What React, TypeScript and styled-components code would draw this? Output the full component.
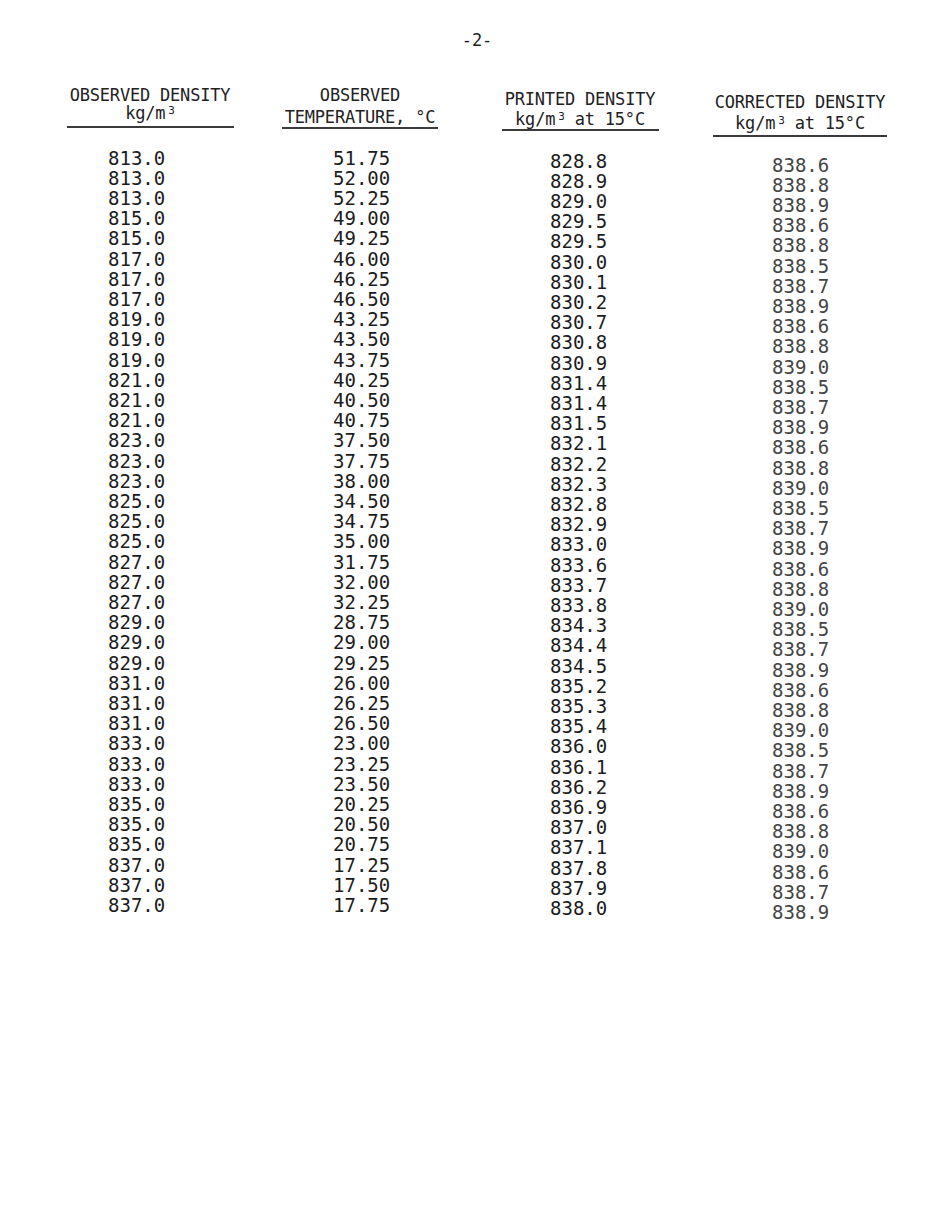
import styled, { createGlobalStyle } from 'styled-components';

const GlobalStyle = createGlobalStyle`
    body {
        margin: 0;
        background: #ffffff;
        font-family: "DejaVu Sans Mono", "Liberation Mono", monospace;
        color: #1e1e1e;
    }
`;

const Page = styled.main`
    width: 950px;
    min-height: 1230px;
    box-sizing: border-box;
    padding-top: 30px;
    background: #fff;
`;

const PageNumber = styled.div`
    text-align: center;
    font-size: 17px;
    line-height: 20px;
    padding-left: 4px;
`;

const Table = styled.section`
    display: grid;
    grid-template-columns: 200px 220px 220px 220px;
    padding-left: 50px;
    margin-top: 36px;
`;

const Column = styled.div<{ $top: number }>`
    display: flex;
    flex-direction: column;
    margin-top: ${(p) => p.$top}px;
`;

const HeadLine = styled.div<{ $gap?: number }>`
    text-align: center;
    font-size: 17px;
    line-height: 19px;
    letter-spacing: -0.2px;
    color: #222;
    margin-top: ${(p) => p.$gap || 0}px;
    white-space: nowrap;
`;

const Sup = styled.span`
    display: inline-block;
    font-size: 11px;
    line-height: 11px;
    position: relative;
    top: -5px;
    margin-left: 3px;
`;

const Rule = styled.div<{ $width: number; $gap: number }>`
    align-self: center;
    width: ${(p) => p.$width}px;
    height: 1.5px;
    background: #3a3a3a;
    margin-top: ${(p) => p.$gap}px;
`;

const Values = styled.div<{ $left: number; $gap: number; $faint?: boolean }>`
    display: flex;
    flex-direction: column;
    padding-left: ${(p) => p.$left}px;
    margin-top: ${(p) => p.$gap}px;
    font-size: 19px;
    line-height: 20.2px;
    color: ${(p) => (p.$faint ? '#454545' : '#1c1c1c')};
`;

const Value = styled.span`
    white-space: pre;
`;

const unit = (
    <>
        kg/m<Sup>3</Sup>
    </>
);

const observed = [
    '813.0', '813.0', '813.0', '815.0', '815.0', '817.0', '817.0', '817.0',
    '819.0', '819.0', '819.0', '821.0', '821.0', '821.0', '823.0', '823.0',
    '823.0', '825.0', '825.0', '825.0', '827.0', '827.0', '827.0', '829.0',
    '829.0', '829.0', '831.0', '831.0', '831.0', '833.0', '833.0', '833.0',
    '835.0', '835.0', '835.0', '837.0', '837.0', '837.0',
];

const temperature = [
    '51.75', '52.00', '52.25', '49.00', '49.25', '46.00', '46.25', '46.50',
    '43.25', '43.50', '43.75', '40.25', '40.50', '40.75', '37.50', '37.75',
    '38.00', '34.50', '34.75', '35.00', '31.75', '32.00', '32.25', '28.75',
    '29.00', '29.25', '26.00', '26.25', '26.50', '23.00', '23.25', '23.50',
    '20.25', '20.50', '20.75', '17.25', '17.50', '17.75',
];

const printed = [
    '828.8', '828.9', '829.0', '829.5', '829.5', '830.0', '830.1', '830.2',
    '830.7', '830.8', '830.9', '831.4', '831.4', '831.5', '832.1', '832.2',
    '832.3', '832.8', '832.9', '833.0', '833.6', '833.7', '833.8', '834.3',
    '834.4', '834.5', '835.2', '835.3', '835.4', '836.0', '836.1', '836.2',
    '836.9', '837.0', '837.1', '837.8', '837.9', '838.0',
];

const corrected = [
    '838.6', '838.8', '838.9', '838.6', '838.8', '838.5', '838.7', '838.9',
    '838.6', '838.8', '839.0', '838.5', '838.7', '838.9', '838.6', '838.8',
    '839.0', '838.5', '838.7', '838.9', '838.6', '838.8', '839.0', '838.5',
    '838.7', '838.9', '838.6', '838.8', '839.0', '838.5', '838.7', '838.9',
    '838.6', '838.8', '839.0', '838.6', '838.7', '838.9',
];

const columns = [
    {
        key: 'observed',
        title: 'OBSERVED DENSITY',
        sub: unit,
        top: 0,
        lineGap: -1,
        rule: 167,
        ruleGap: 3,
        left: 58,
        bodyGap: 20,
        values: observed,
    },
    {
        key: 'temperature',
        title: 'OBSERVED',
        sub: 'TEMPERATURE, °C',
        top: 0,
        lineGap: 3,
        rule: 156,
        ruleGap: 0,
        left: 83,
        bodyGap: 19,
        values: temperature,
    },
    {
        key: 'printed',
        title: 'PRINTED DENSITY',
        sub: <>{unit} at 15°C</>,
        top: 4,
        lineGap: 1,
        rule: 157,
        ruleGap: 0,
        left: 80,
        bodyGap: 20,
        values: printed,
    },
    {
        key: 'corrected',
        title: 'CORRECTED DENSITY',
        sub: <>{unit} at 15°C</>,
        top: 7,
        lineGap: 2,
        rule: 174,
        ruleGap: 2,
        left: 82,
        bodyGap: 18,
        values: corrected,
        faint: true,
    },
];

function App() {
    return (
        <Page>
            <GlobalStyle />
            <PageNumber>-2-</PageNumber>
            <Table>
                {columns.map((col) => (
                    <Column key={col.key} $top={col.top}>
                        <HeadLine>{col.title}</HeadLine>
                        <HeadLine $gap={col.lineGap}>{col.sub}</HeadLine>
                        <Rule $width={col.rule} $gap={col.ruleGap} />
                        <Values
                            $left={col.left}
                            $gap={col.bodyGap}
                            $faint={col.faint}
                        >
                            {col.values.map((v, i) => (
                                <Value key={i}>{v}</Value>
                            ))}
                        </Values>
                    </Column>
                ))}
            </Table>
        </Page>
    );
}

export default App;
